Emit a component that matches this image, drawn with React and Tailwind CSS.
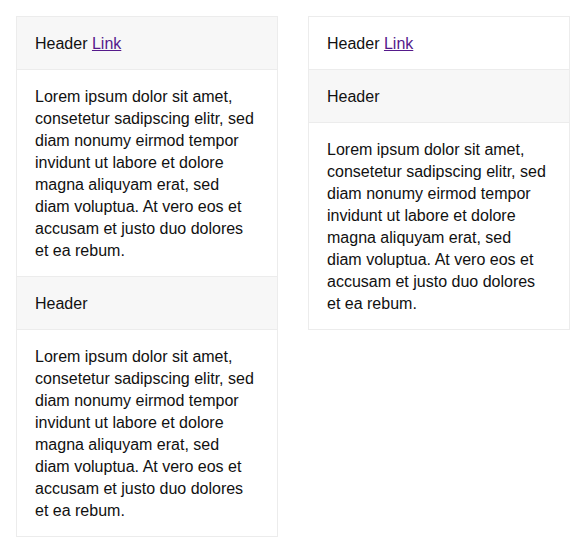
import React from "react";

const lorem =
  "Lorem ipsum dolor sit amet, consetetur sadipscing elitr, sed diam nonumy eirmod tempor invidunt ut labore et dolore magna aliquyam erat, sed diam voluptua. At vero eos et accusam et justo duo dolores et ea rebum.";

function Header({ children, white }) {
  return (
    <div
      className={`pl-[18px] pr-[18px] pt-4 pb-[14px] leading-[22px] border-b border-[#ececec] ${
        white ? "bg-white" : "bg-[#f7f7f7]"
      }`}
    >
      {children}
    </div>
  );
}

function Body({ last }) {
  return (
    <div
      className={`pl-[18px] pr-[20px] pt-4 pb-[14px] leading-[22px] bg-white ${
        last ? "" : "border-b border-[#ececec]"
      }`}
    >
      {lorem}
    </div>
  );
}

function HeaderLink() {
  return (
    <>
      Header{" "}
      <a href="#" className="text-[#551a8b] underline">
        Link
      </a>
    </>
  );
}

export default function App() {
  return (
    <div
      className="min-h-screen bg-white p-4 text-[16px] text-[#111]"
      style={{ fontFamily: '"Liberation Sans", Arial, sans-serif' }}
    >
      <div className="grid grid-cols-2 gap-[30px] items-start">
        <div className="border border-[#ececec]">
          <Header>
            <HeaderLink />
          </Header>
          <Body />
          <Header>Header</Header>
          <Body last />
        </div>
        <div className="border border-[#ececec]">
          <Header white>
            <HeaderLink />
          </Header>
          <Header>Header</Header>
          <Body last />
        </div>
      </div>
    </div>
  );
}
